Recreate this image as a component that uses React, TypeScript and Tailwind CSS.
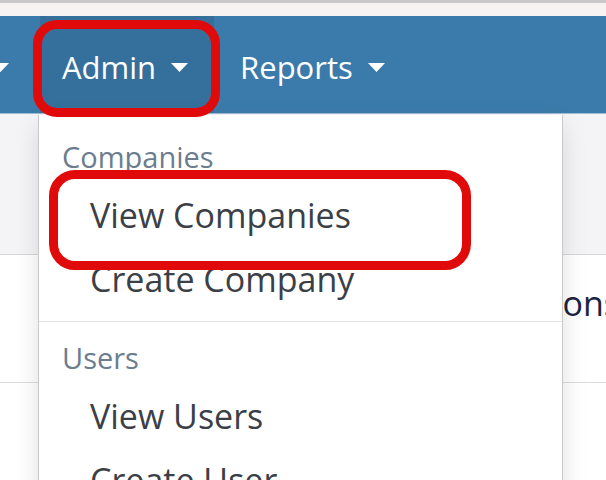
const companyLinks = ["View Companies", "Create Company"]
const userLinks = ["View Users", "Create User"]

function Caret() {
    return (
        <svg width="17" height="9" viewBox="0 0 17 9" className="shrink-0">
            <polygon points="0,0 17,0 8.5,9" fill="#ffffff" />
        </svg>
    )
}

function MenuHeader({ label }: { label: string }) {
    return (
        <div className="h-[46px] leading-[46px] mb-[3px] pl-[23px] text-[29px] text-[#6b7d8e]">
            {label}
        </div>
    )
}

function MenuItem({ label }: { label: string }) {
    return (
        <a href="#" className="block h-[64px] leading-[64px] pl-[51px] text-[34px] text-[#3b4047] whitespace-nowrap">
            {label}
        </a>
    )
}

export default function App() {
    return (
        <div className="relative w-[606px] h-[480px] overflow-hidden bg-white font-['Open_Sans',sans-serif]">
            <div className="h-[3px] bg-[#c9c9c9]" />
            <div className="h-[13px] bg-[#f7f3f3]" />

            <nav className="h-[98px] bg-[#3b7bab] flex items-stretch border-b border-[#9fbdd4]">
                <div className="flex items-center w-[48px] -ml-[8px] pt-[6px]">
                    <Caret />
                </div>
                <a href="#" className="flex items-center gap-[15px] pl-[22px] pr-[26px] pt-[5px] bg-[#35709d] text-white text-[31px]">
                    Admin
                    <Caret />
                </a>
                <a href="#" className="flex items-center gap-[15px] pl-[26px] pr-[26px] pt-[5px] text-white text-[31px]">
                    Reports
                    <Caret />
                </a>
            </nav>

            <div className="h-[141px] bg-[#f4f4f6] border-b border-[#d6d6d6]" />
            <div className="h-[128px] border-b border-[#dcdcdc] flex justify-end items-center overflow-hidden pb-[30px]">
                <span className="text-[34px] text-[#1c2340] whitespace-nowrap -mr-[14px]">Registrations</span>
            </div>

            <div className="absolute left-[38px] top-[115px] w-[525px] h-[400px] bg-white border-x border-[#c9c9c9] shadow-[0_10px_24px_rgba(0,0,0,0.12)] pt-[19px]">
                <MenuHeader label="Companies" />
                {companyLinks.map((link) => (
                    <MenuItem key={link} label={link} />
                ))}
                <div className="mt-[10px] mb-[13px] h-px bg-[#e2e2e2]" />
                <MenuHeader label="Users" />
                {userLinks.map((link) => (
                    <MenuItem key={link} label={link} />
                ))}
            </div>

            {/* red highlight annotations */}
            <div className="absolute left-[33px] top-[20px] w-[187px] h-[97px] border-[9px] border-[#e10a0a] rounded-[24px]" />
            <div className="absolute left-[49px] top-[170px] w-[422px] h-[100px] border-[9px] border-[#e10a0a] rounded-[26px]" />
        </div>
    )
}
